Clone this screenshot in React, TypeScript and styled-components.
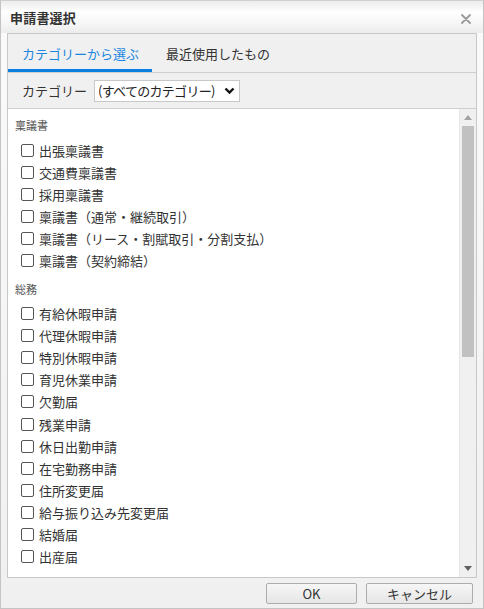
import React, { useState } from "react";
import styled, { createGlobalStyle } from "styled-components";

const GlobalStyle = createGlobalStyle`
  html, body {
    margin: 0;
    padding: 0;
    background: #fff;
  }
  body {
    font-family: "Noto Sans CJK JP", "Noto Sans", sans-serif;
    color: #333;
  }
`;

const groups = [
  {
    title: "稟議書",
    items: [
      "出張稟議書",
      "交通費稟議書",
      "採用稟議書",
      "稟議書（通常・継続取引）",
      "稟議書（リース・割賦取引・分割支払）",
      "稟議書（契約締結）",
    ],
  },
  {
    title: "総務",
    items: [
      "有給休暇申請",
      "代理休暇申請",
      "特別休暇申請",
      "育児休業申請",
      "欠勤届",
      "残業申請",
      "休日出勤申請",
      "在宅勤務申請",
      "住所変更届",
      "給与振り込み先変更届",
      "結婚届",
      "出産届",
    ],
  },
];

export default function App() {
  const [tab, setTab] = useState(0);
  const [checked, setChecked] = useState<Record<string, boolean>>({});

  return (
    <>
      <GlobalStyle />
      <Dialog>
        <TitleBar>
          <Title>申請書選択</Title>
          <CloseButton aria-label="close">
            <svg width="10" height="10" viewBox="0 0 10 10">
              <path
                d="M1 1 L9 9 M9 1 L1 9"
                stroke="#9a9a9a"
                strokeWidth="1.8"
                strokeLinecap="round"
              />
            </svg>
          </CloseButton>
        </TitleBar>

        <Body>
          <Panel>
            <Tabs>
              <Tab $active={tab === 0} onClick={() => setTab(0)}>
                カテゴリーから選ぶ
              </Tab>
              <Tab $active={tab === 1} onClick={() => setTab(1)}>
                最近使用したもの
              </Tab>
            </Tabs>

            <FilterRow>
              <FilterLabel>カテゴリー</FilterLabel>
              <SelectBox>
                <span>(すべてのカテゴリー)</span>
                <svg width="11" height="8" viewBox="0 0 11 8">
                  <path
                    d="M1.5 1.5 L5.5 5.5 L9.5 1.5"
                    stroke="#111"
                    strokeWidth="2.4"
                    fill="none"
                  />
                </svg>
              </SelectBox>
            </FilterRow>

            <ListArea>
              <List>
                {groups.map((g) => (
                  <Group key={g.title}>
                    <GroupTitle>{g.title}</GroupTitle>
                    {g.items.map((it) => (
                      <Item key={it}>
                        <Check
                          type="checkbox"
                          checked={!!checked[it]}
                          onChange={() =>
                            setChecked((c) => ({ ...c, [it]: !c[it] }))
                          }
                        />
                        <span>{it}</span>
                      </Item>
                    ))}
                  </Group>
                ))}
              </List>
              <Scrollbar>
                <Arrow>
                  <svg width="8" height="5" viewBox="0 0 8 5">
                    <path d="M0 5 L4 0 L8 5 Z" fill="#a3a3a3" />
                  </svg>
                </Arrow>
                <Track>
                  <Thumb />
                </Track>
                <Arrow>
                  <svg width="8" height="5" viewBox="0 0 8 5">
                    <path d="M0 0 L8 0 L4 5 Z" fill="#606060" />
                  </svg>
                </Arrow>
              </Scrollbar>
            </ListArea>
          </Panel>

          <Footer>
            <Button $w={91}>OK</Button>
            <Button $w={107}>キャンセル</Button>
          </Footer>
        </Body>
      </Dialog>
    </>
  );
}

const Dialog = styled.div`
  width: 484px;
  height: 609px;
  box-sizing: border-box;
  border: 1px solid #c4c4c4;
  border-top-color: #d0d0d0;
  display: flex;
  flex-direction: column;
  background: #fafafa;
  overflow: hidden;
`;

const TitleBar = styled.div`
  height: 32px;
  flex: none;
  display: flex;
  align-items: center;
  justify-content: space-between;
  padding: 0 10px 0 9px;
  background: linear-gradient(#ececec 0%, #ffffff 35%, #f6f6f6 70%, #ececec 100%);
`;

const Title = styled.div`
  font-size: 13px;
  font-weight: bold;
  color: #333;
  letter-spacing: 0.2px;
`;

const CloseButton = styled.button`
  border: none;
  background: transparent;
  padding: 0;
  margin-top: 4px;
  width: 14px;
  height: 14px;
  display: flex;
  align-items: center;
  justify-content: center;
  cursor: pointer;
`;

const Body = styled.div`
  flex: 1;
  display: flex;
  flex-direction: column;
  padding: 0 6px 0 6px;
  background: linear-gradient(#fafafa, #f0f0f0);
  min-height: 0;
`;

const Panel = styled.div`
  flex: 1;
  min-height: 0;
  display: flex;
  flex-direction: column;
  border: 1px solid #c8c8c8;
  background: #fff;
`;

const Tabs = styled.div`
  height: 38px;
  flex: none;
  display: flex;
  background: #f0f0f0;
  border-bottom: 1px solid #cfcfcf;
`;

const Tab = styled.div<{ $active: boolean }>`
  padding: 0 13px 0 14px;
  display: flex;
  align-items: center;
  font-size: 13px;
  color: ${(p) => (p.$active ? "#1a86e0" : "#333")};
  border-bottom: 3px solid ${(p) => (p.$active ? "#0a7fe0" : "transparent")};
  padding-top: 3px;
  box-sizing: border-box;
  cursor: pointer;
`;

const FilterRow = styled.div`
  height: 35px;
  flex: none;
  display: flex;
  align-items: center;
  gap: 7px;
  padding-left: 14px;
  background: #f0f0f0;
  border-bottom: 1px solid #cfcfcf;
`;

const FilterLabel = styled.span`
  font-size: 13px;
  color: #333;
`;

const SelectBox = styled.div`
  width: 146px;
  height: 22px;
  box-sizing: border-box;
  border: 1px solid #c8c8c8;
  background: #fff;
  display: flex;
  align-items: center;
  justify-content: space-between;
  padding: 0 4px 0 3px;
  font-size: 13px;
  color: #222;
  white-space: nowrap;
  overflow: hidden;
  span {
    letter-spacing: -0.7px;
  }
  svg {
    flex: none;
  }
`;

const ListArea = styled.div`
  flex: 1;
  min-height: 0;
  display: flex;
`;

const List = styled.div`
  flex: 1;
  overflow: hidden;
  padding: 8px 0 0 7px;
`;

const Group = styled.div`
  margin-bottom: 9px;
`;

const GroupTitle = styled.div`
  font-size: 11px;
  line-height: 16px;
  color: #555;
  margin-bottom: 6px;
`;

const Item = styled.label`
  height: 22.1px;
  display: flex;
  align-items: center;
  gap: 5px;
  padding-left: 6px;
  font-size: 13px;
  color: #333;
`;

const Check = styled.input`
  appearance: none;
  margin: 0;
  width: 13px;
  height: 13px;
  border: 1px solid #555;
  border-radius: 2px;
  background: #fff;
  box-sizing: border-box;
  flex: none;
  &:checked {
    background: #0a7fe0;
    border-color: #0a7fe0;
  }
`;

const Scrollbar = styled.div`
  width: 16px;
  flex: none;
  display: flex;
  flex-direction: column;
  background: #f0f0f0;
  border-left: 1px solid #e6e6e6;
`;

const Arrow = styled.div`
  height: 17px;
  flex: none;
  display: flex;
  align-items: center;
  justify-content: center;
`;

const Track = styled.div`
  flex: 1;
  padding: 0 2px;
`;

const Thumb = styled.div`
  height: 231px;
  background: #c1c1c1;
`;

const Footer = styled.div`
  height: 30px;
  flex: none;
  display: flex;
  justify-content: flex-end;
  align-items: center;
  gap: 9px;
  padding: 0 4px 0 0;
`;

const Button = styled.button<{ $w: number }>`
  width: ${(p) => p.$w}px;
  height: 21px;
  border: 1px solid #acacac;
  border-radius: 2px;
  background: linear-gradient(#f6f6f6, #e6e6e6);
  font-family: "Noto Sans CJK JP", "Noto Sans", sans-serif;
  font-size: 13px;
  color: #333;
  padding: 0;
  display: flex;
  align-items: center;
  justify-content: center;
  cursor: pointer;
`;
